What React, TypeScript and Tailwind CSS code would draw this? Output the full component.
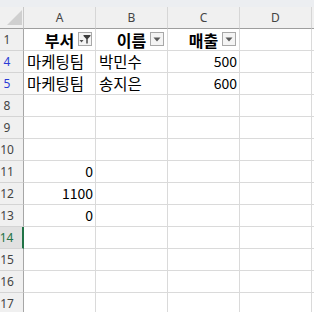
const cols = ["A", "B", "C", "D"];

type Cell = { text?: string; align?: "left" | "right" | "center"; bold?: boolean; filter?: "on" | "off" };

type Row = { num: number; color?: "blue" | "green"; cells: Cell[] };

const rows: Row[] = [
  {
    num: 1,
    cells: [
      { text: "부서", align: "center", bold: true, filter: "on" },
      { text: "이름", align: "center", bold: true, filter: "off" },
      { text: "매출", align: "center", bold: true, filter: "off" },
      {},
    ],
  },
  { num: 4, color: "blue", cells: [{ text: "마케팅팀" }, { text: "박민수" }, { text: "500", align: "right" }, {}] },
  { num: 5, color: "blue", cells: [{ text: "마케팅팀" }, { text: "송지은" }, { text: "600", align: "right" }, {}] },
  { num: 8, cells: [{}, {}, {}, {}] },
  { num: 9, cells: [{}, {}, {}, {}] },
  { num: 10, cells: [{}, {}, {}, {}] },
  { num: 11, cells: [{ text: "0", align: "right" }, {}, {}, {}] },
  { num: 12, cells: [{ text: "1100", align: "right" }, {}, {}, {}] },
  { num: 13, cells: [{ text: "0", align: "right" }, {}, {}, {}] },
  { num: 14, color: "green", cells: [{}, {}, {}, {}] },
  { num: 15, cells: [{}, {}, {}, {}] },
  { num: 16, cells: [{}, {}, {}, {}] },
  { num: 17, cells: [{}, {}, {}, {}] },
];

function FilterButton({ active }: { active: boolean }) {
  return (
    <span className="absolute right-[3px] top-[3px] w-[14px] h-[14px] border border-[#a8a8a8] bg-[#f4f4f4] flex items-center justify-center">
      {active ? (
        <svg width="12" height="12" viewBox="0 0 12 12">
          <polygon points="0.5,7 4.5,7 2.5,9.5" fill="#505050" />
          <polygon points="4.5,2 11.5,2 11.5,3 8.7,6 8.7,10.5 7.3,10.5 7.3,6 4.5,3" fill="#3c3c3c" />
        </svg>
      ) : (
        <svg width="8" height="5" viewBox="0 0 8 5">
          <polygon points="0.5,0.5 7.5,0.5 4,4.5" fill="#595959" />
        </svg>
      )}
    </span>
  );
}

function DataCell({ cell }: { cell: Cell }) {
  const numeric = cell.align === "right";
  const justify = numeric ? "justify-end pr-[2px]" : cell.align === "center" ? "justify-center" : "justify-start pl-[3px]";
  const size = cell.bold ? "font-bold text-[16px]" : numeric ? "text-[14px]" : "text-[15.5px]";
  return (
    <div
      className={`relative h-[22px] border-r border-b border-[#dadada] flex items-center whitespace-nowrap overflow-hidden ${justify} ${size}`}
    >
      {cell.text}
      {cell.filter && <FilterButton active={cell.filter === "on"} />}
    </div>
  );
}

export default function App() {
  return (
    <div className="w-[314px] h-[312px] overflow-hidden bg-white text-black font-['Noto_Sans_CJK_KR','Noto_Sans',sans-serif]">
      <div className="h-[7px] bg-[#eceef1]" />
      <div className="grid grid-cols-[24px_72px_72px_72px_72px_1fr]">
        {/* column headers */}
        <div className="relative h-[22px] bg-[#f0f0f0] border-r border-b border-r-[#c8c8c8] border-b-[#9e9e9e]">
          <svg className="absolute left-[7px] top-[3px]" width="15" height="15" viewBox="0 0 15 15">
            <polygon points="0,15 15,15 15,0" fill="#cfcfcf" />
          </svg>
        </div>
        {cols.map((c) => (
          <div
            key={c}
            className="h-[22px] bg-[#f0f0f0] border-r border-b border-r-[#d6d6d6] border-b-[#9e9e9e] flex items-center justify-center text-[12px] text-[#444] font-['Noto_Sans',sans-serif]"
          >
            {c}
          </div>
        ))}
        <div className="h-[22px] bg-[#f0f0f0] border-b border-b-[#9e9e9e]" />

        {rows.map((r) => (
          <div key={r.num} className="contents">
            <div
              className={`h-[22px] border-b border-b-[#d4d4d4] flex items-center justify-center pr-[9px] text-[12px] font-['Noto_Sans',sans-serif] ${
                r.color === "green"
                  ? "bg-[#e1e1e1] text-[#217346] border-r-2 border-r-[#217346]"
                  : "bg-[#f0f0f0] border-r border-r-[#a6a6a6] " + (r.color === "blue" ? "text-[#2a3bd6]" : "text-[#444]")
              }`}
            >
              {r.num}
            </div>
            {r.cells.map((cell, i) => (
              <DataCell key={i} cell={cell} />
            ))}
            <div className="h-[22px] border-b border-[#dadada]" />
          </div>
        ))}
      </div>
    </div>
  );
}
